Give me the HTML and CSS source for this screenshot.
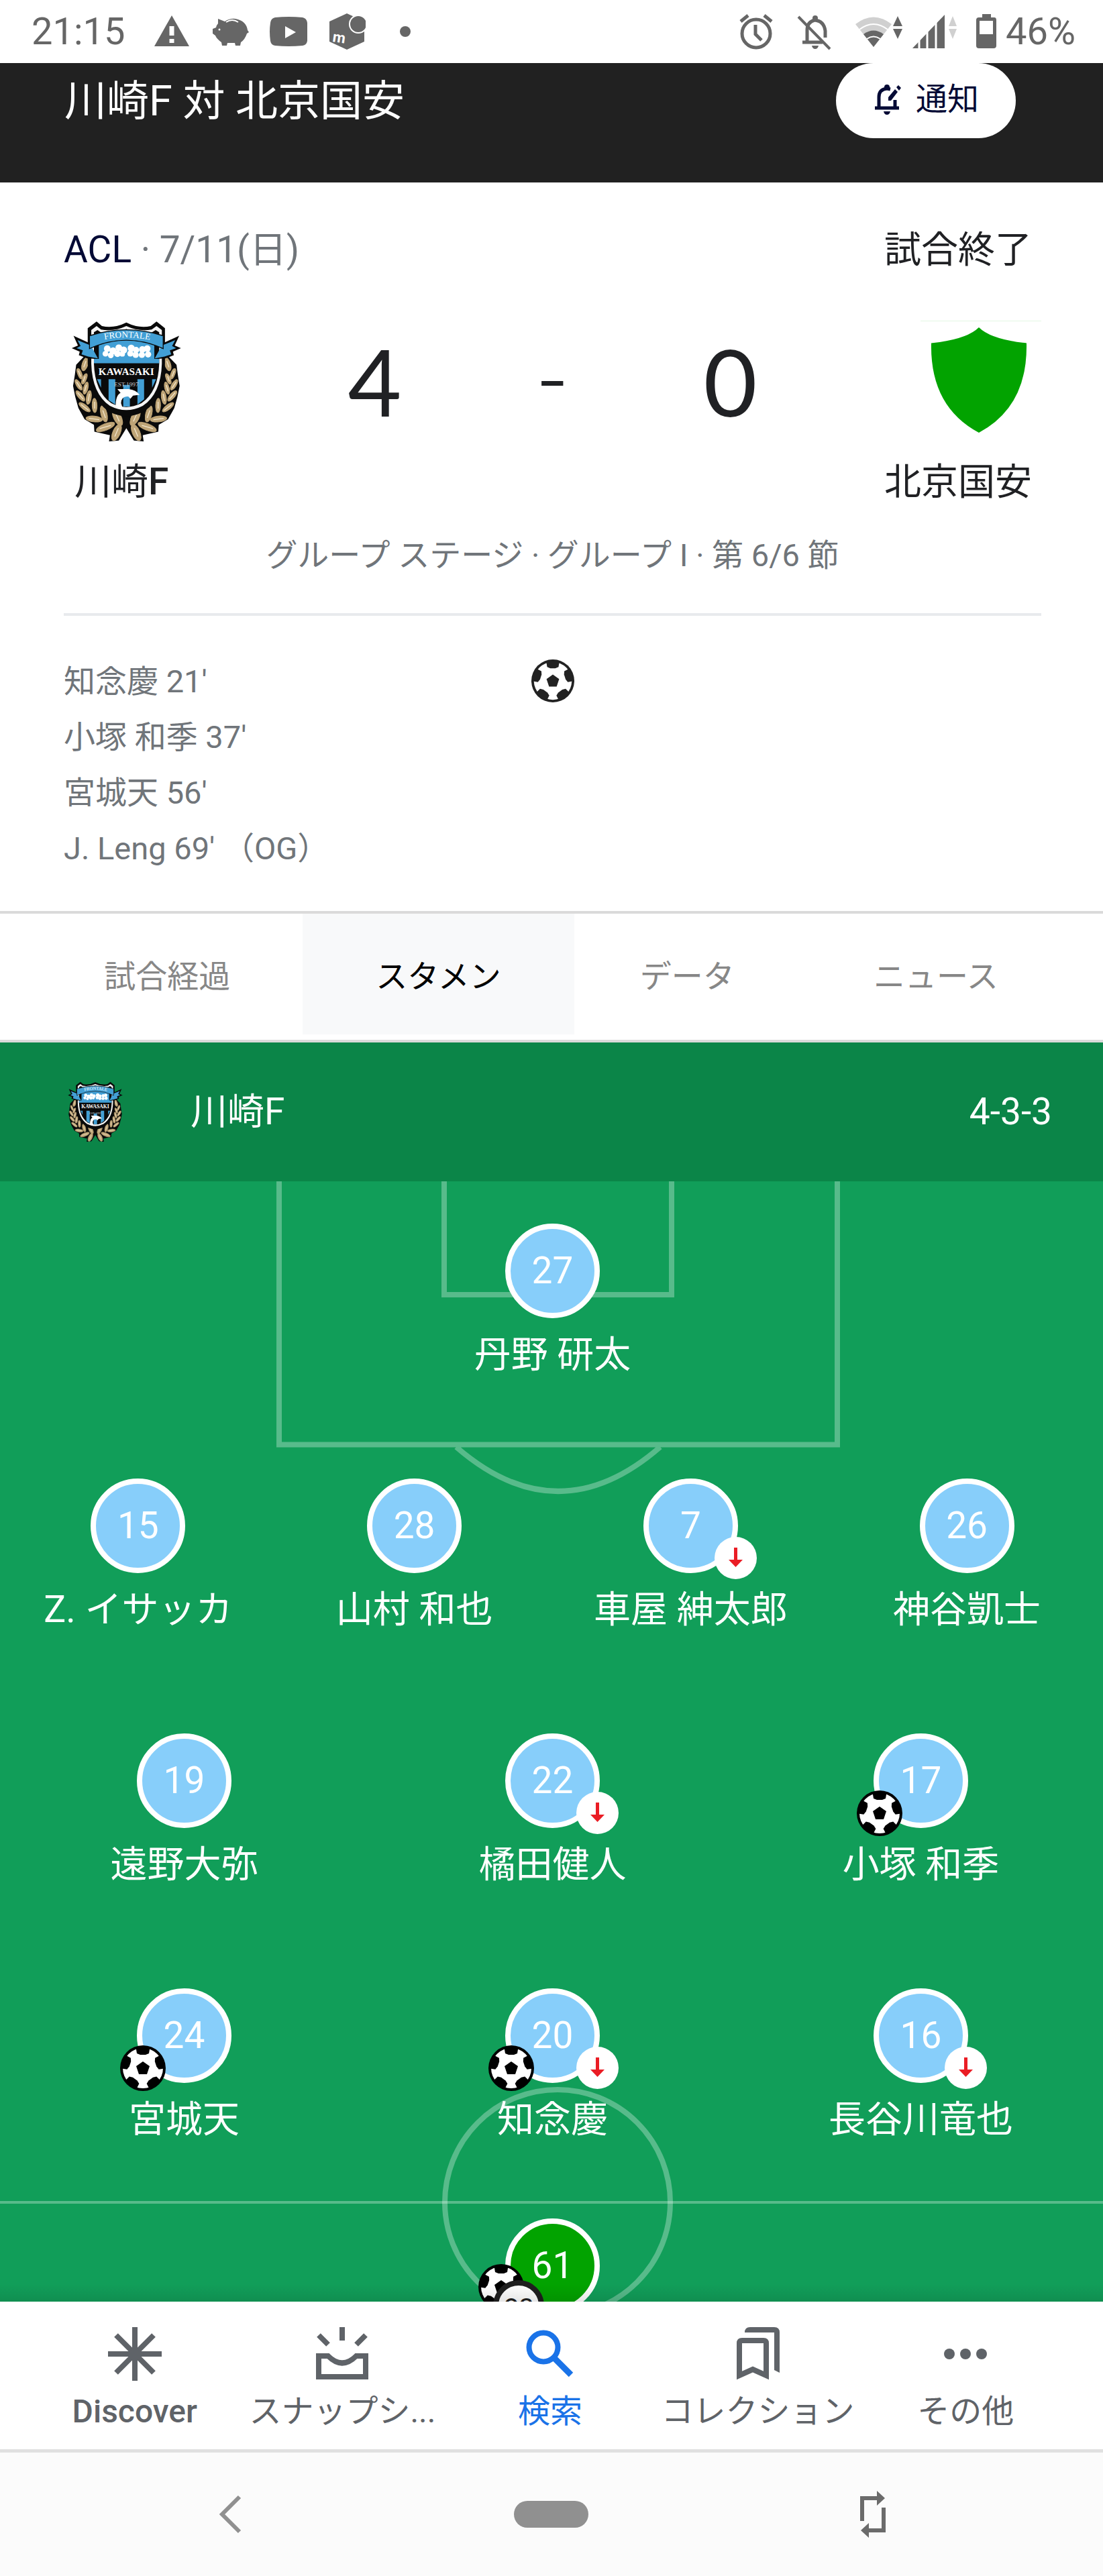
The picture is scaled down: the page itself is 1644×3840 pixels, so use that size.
FILE: index.html
```html
<!DOCTYPE html>
<html lang="ja">
<head>
    <meta charset="UTF-8">
    <meta name="viewport" content="width=device-width, initial-scale=1.0">
    <title>川崎F 対 北京国安</title>
    <link rel="stylesheet" href="styles.css">
</head>
<body>
    <!-- Shared shapes -->
    <svg class="defs" width="0" height="0" aria-hidden="true">
        <symbol id="ball" viewBox="0 0 68 68">
            <clipPath id="ball-clip"><circle cx="34" cy="34" r="32"/></clipPath>
            <circle cx="34" cy="34" r="34" fill="currentColor"/>
            <circle cx="34" cy="34" r="30" fill="#fff"/>
            <path d="M34 24l10 7-4 12H28l-4-12z" fill="currentColor"/>
            <g fill="currentColor" clip-path="url(#ball-clip)">
                <path id="patch" d="M23 0h22l-2 12-5 2h-8l-5-2z"/>
                <use href="#patch" transform="rotate(72 34 34)"/>
                <use href="#patch" transform="rotate(144 34 34)"/>
                <use href="#patch" transform="rotate(216 34 34)"/>
                <use href="#patch" transform="rotate(288 34 34)"/>
            </g>
        </symbol>
        <symbol id="out" viewBox="0 0 63 63">
            <circle cx="31.5" cy="31.5" r="31.5" fill="#fff"/>
            <path d="M29 16h5v18h8L31.5 45 21 34h8z" fill="#ea1d25"/>
        </symbol>
    </svg>

    <!-- Phone status bar -->
    <div class="status-bar">
        <span class="time">21:15</span>
        <div class="status-icons">
            <svg width="56" height="56" viewBox="0 0 56 56"><path d="M28 4l26 46H2z"/><path d="M24.500 20h7v14h-7zM24.500 39h7v6h-7z" fill="#fff"/></svg>
            <svg width="56" height="56" viewBox="0 0 56 56"><path d="M10 9l10 4q8-5 16-4 16 3 18 17l2 3-3 2q-3 9-9 13l-1 5h-7l-1-4H24l-1 4h-7l-1-5Q8 39 6 34l-4-3v-7l5-2q1-4 3-6z"/><path d="M22 14q9-6 18 0" fill="none" stroke="#fff" stroke-width="2"/><circle cx="12" cy="25" r="1.500" fill="#fff"/></svg>
            <svg width="56" height="56" viewBox="0 0 56 56"><path d="M8 7q20-2 41 0 6 1 7 8 1 13 0 27-1 6-7 7-21 2-41 0-6-1-7-7-2-14 0-27 1-7 7-8z"/><path d="M23 20l16 9-16 9z" fill="#fff"/></svg>
            <svg width="56" height="56" viewBox="0 0 56 56"><path d="M28 1l26 12v30L28 55 2 43V13z"/><circle cx="45" cy="17" r="14" fill="#fff"/><circle cx="45" cy="17" r="12"/><text x="6" y="43" font-size="22" font-weight="bold" fill="#fff" transform="rotate(8 6 43)">m</text></svg>
            <svg width="56" height="56" viewBox="0 0 56 56"><circle cx="28" cy="28" r="8"/></svg>
        </div>
        <div class="status-icons status-right">
            <svg width="52" height="56" viewBox="0 0 52 56"><circle cx="26" cy="31" r="21" fill="none" stroke="#666" stroke-width="5"/><path d="M25 18v14l9 9M3 13l11-9M49 13L38 4" fill="none" stroke="#666" stroke-width="5"/></svg>
            <svg class="bell-off" width="52" height="56" viewBox="0 0 52 56"><path d="M15 44V26q0-12 11-15 14 1 16 16v10M8 44h30" fill="none" stroke="#666" stroke-width="5"/><circle cx="27" cy="8" r="4"/><path d="M22 49h10q-1 5-5 5t-5-5z"/><path d="M2 6l47 48" fill="none" stroke="#666" stroke-width="4"/></svg>
            <svg width="70" height="56" viewBox="0 0 70 56"><path d="M27 51L0 17Q27-4 54 17z" fill="#d0d0d0"/><path d="M27 51L12 32q15-11 30 0z"/><path d="M6 25q21-16 42 0M17 39q10-7 20 0" fill="none" stroke="#fff" stroke-width="2"/><path d="M63 5l7 15H56zM63 39l7-15H56z"/></svg>
            <svg width="70" height="56" viewBox="0 0 70 56"><path d="M2 53L50 3v50z"/><path d="M12 0v56M24 0v56M37 0v56" stroke="#fff" stroke-width="3"/><path d="M62 5l6 15H56zM62 39l6-15H56z" fill="#d0d0d0"/></svg>
            <svg class="battery" width="32" height="56" viewBox="0 0 32 56"><path d="M10 2h13v5h5q3 0 3 4v38q0 4-4 4H5q-4 0-4-4V11q0-4 4-4h5z"/><path d="M6 12h20v20H6z" fill="#fff"/></svg>
            <span>46%</span>
        </div>
    </div>

    <!-- Match header -->
    <header class="header">
        <h1>川崎F 対 北京国安</h1>
        <button class="notify" type="button">
            <svg width="44" height="50" viewBox="0 0 44 50"><path d="M3 38h36M9 38V22q0-12 12-13l5 1M33 26v12" fill="none" stroke="#040a35" stroke-width="5"/><circle cx="21" cy="7" r="4"/><path d="M16 43h10q-1 5-5 5t-5-5zM23 22l10-12 4 4-10 13h-4zM35 7l3-3 4 4-3 4z"/></svg>
            通知
        </button>
    </header>

    <!-- Score -->
    <section class="match">
        <div class="match-info">
            <div><a href="#">ACL</a> · 7/11(日)</div>
            <div class="match-state">試合終了</div>
        </div>
        <div class="score-board">
            <div class="team">
                <svg width="180" height="180" viewBox="14 56 544 544">
                    <g id="crest">
                        <!-- laurel -->
                        <path d="M108 215L70 255 64 300 56 350 66 400 80 450 108 500 150 525 152 556 222 572 218 600 262 596 296 540 330 596 374 600 370 572 440 556 442 525 484 500 512 450 526 400 536 350 528 300 522 255 484 215z" fill="#0a0a0a"/>
                        <g id="laurel">
                            <g fill="#bfa577" stroke="#bfa577" stroke-width="3">
                                <ellipse cx="110" cy="252" rx="13" ry="31" transform="rotate(18 110 252)"/>
                                <ellipse cx="86" cy="295" rx="9" ry="25" transform="rotate(-22 86 295)"/>
                                <ellipse cx="107" cy="318" rx="9" ry="25" transform="rotate(22 107 318)"/>
                                <ellipse cx="81" cy="345" rx="10" ry="27" transform="rotate(-32 81 345)"/>
                                <ellipse cx="113" cy="360" rx="10" ry="28" transform="rotate(14 113 360)"/>
                                <ellipse cx="89" cy="395" rx="11" ry="29" transform="rotate(-40 89 395)"/>
                                <ellipse cx="127" cy="402" rx="11" ry="31" transform="rotate(8 127 402)"/>
                                <ellipse cx="108" cy="446" rx="11" ry="31" transform="rotate(-52 108 446)"/>
                                <ellipse cx="153" cy="438" rx="11" ry="32" transform="rotate(-2 153 438)"/>
                                <ellipse cx="151" cy="499" rx="13" ry="37" transform="rotate(-84 151 499)"/>
                                <ellipse cx="195" cy="476" rx="14" ry="37" transform="rotate(-14 195 476)"/>
                                <ellipse cx="202" cy="535" rx="15" ry="44" transform="rotate(-112 202 535)"/>
                                <ellipse cx="256" cy="492" rx="17" ry="40" transform="rotate(-26 256 492)"/>
                                <ellipse cx="252" cy="560" rx="17" ry="39" transform="rotate(24 252 560)"/>
                            </g>
                            <path d="M104 266l10-28M80 282l10 26M110 306l-8 24M72 332l18 28M116 346l-8 28M76 380l26 30M130 386l-6 32M92 434l34 26M153 422v30M128 496l46 6M190 460l12 34M176 542l50-14M248 474l16 36M260 540l-16 38" fill="none" stroke="#f3e6cc" stroke-width="4"/>
                        </g>
                        <use href="#laurel" transform="translate(592 0) scale(-1 1)"/>
                        <!-- shield -->
                        <path d="M122 90L162 60 186 80Q240 92 296 64 352 92 406 80L432 60 470 90V250Q468 400 380 462 296 512 212 462 130 400 122 250z" fill="#0a0a0a"/>
                        <path d="M138 98L162 80 182 96Q240 106 296 80 352 106 410 96L432 80 456 98V250Q452 385 370 440 296 478 222 440 142 385 138 250z" fill="#f5f5f5"/>
                        <path d="M150 108L166 98 180 108Q240 116 296 94 352 116 412 108L428 98 444 108V250Q440 375 364 428 296 462 228 428 154 375 150 250z" fill="#0a0a0a"/>
                        <path d="M172 135h250v113H150v-20h22zM422 135v93h22v20h-22zM216 320h30v114l-30-20zM282 345h30v98h-30zM346 320h30v90l-30 24zM164 320h18v38zM412 320h18l-18 38z" fill="#429fd5"/>
                        <g fill="#fff">
                            <circle cx="210" cy="182" r="15"/><circle cx="202" cy="205" r="13"/><circle cx="226" cy="212" r="13"/><circle cx="236" cy="192" r="16"/>
                            <circle cx="262" cy="178" r="15"/><circle cx="256" cy="205" r="15"/><circle cx="284" cy="188" r="16"/><circle cx="278" cy="206" r="12"/>
                            <circle cx="318" cy="180" r="16"/><circle cx="314" cy="204" r="14"/><circle cx="340" cy="188" r="14"/><circle cx="338" cy="210" r="14"/>
                            <circle cx="368" cy="186" r="15"/><circle cx="366" cy="210" r="14"/><circle cx="390" cy="182" r="15"/><circle cx="394" cy="208" r="14"/>
                        </g>
                        <path d="M248 440q0-48 22-58l-14-18h50q34 4 50 26l-30 4-12 14-8-10q-32-4-34 30l10 30-16-6z" fill="#fff"/>
                        <!-- ribbon -->
                        <path d="M58 124L132 158V206L166 214 160 228 120 226 82 212 86 196 50 180 78 168zM534 124L460 158V206L426 214 432 228 472 226 510 212 506 196 542 180 514 168z" fill="#0a0a0a"/>
                        <path d="M76 144L136 168 168 226 124 218 94 208 100 190 72 180 90 170zM516 144L456 168 424 226 468 218 498 208 492 190 520 180 502 170z" fill="#429fd5"/>
                        <path d="M130 124Q296 70 462 124V182Q296 106 130 182z" fill="#429fd5" stroke="#0a0a0a" stroke-width="4"/>
                        <path id="arc" d="M170 147Q296 116 430 149" fill="none"/>
                        <g fill="#fff" font-family="Liberation Serif, serif">
                            <text font-size="40"><textPath href="#arc" startOffset="50%" text-anchor="middle">FRONTALE</textPath></text>
                            <text x="296" y="300" font-size="46" font-weight="bold" text-anchor="middle">KAWASAKI</text>
                            <text x="296" y="352" font-size="28" text-anchor="middle" fill="#ccc">EST.1997</text>
                        </g>
                    </g>
                </svg>
                <div class="team-name">川崎<b>F</b></div>
            </div>
            <div class="score">4</div>
            <div class="score dash">-</div>
            <div class="score">0</div>
            <div class="team team-away">
                <svg width="180" height="180" viewBox="3 2 180 180"><path d="M3 2h180v1H3z" fill="#e3f6e3"/><path d="M90 12Q108 30 161 35.500 163 130 90 169 17 130 19 35.500 72 30 90 12z" fill="#02a300"/></svg>
                <div class="team-name">北京国安</div>
            </div>
        </div>
        <div class="stage">グループ ステージ · グループ I · 第 6/6 節</div>
        <div class="scorers">
            <ul>
                <li>知念慶 21'</li>
                <li>小塚 和季 37'</li>
                <li>宮城天 56'</li>
                <li>J. Leng 69' （OG）</li>
            </ul>
            <svg class="goal-mark" width="64" height="64"><use href="#ball"/></svg>
        </div>
    </section>

    <!-- Tabs -->
    <nav class="tabs">
        <a href="#">試合経過</a>
        <a href="#" class="active">スタメン</a>
        <a href="#">データ</a>
        <a href="#">ニュース</a>
    </nav>

    <!-- Line-up -->
    <div class="lineup-header">
        <svg width="90" height="90" viewBox="24 56 544 544"><use href="#crest"/></svg>
        <h2>川崎F</h2>
        <span>4-3-3</span>
    </div>
    <main class="pitch">
        <svg class="markings" viewBox="0 0 1644 1670" preserveAspectRatio="xMidYMin slice">
            <g fill="none" stroke="#fff" stroke-width="8" opacity="0.3">
                <path d="M662 0v169h339V0M416 0v392.500h832V0M680 396q152 132 304 0"/>
                <circle cx="831" cy="1522" r="168"/>
            </g>
            <path d="M-2000 1522h6000" stroke="#fff" stroke-width="4" opacity="0.3"/>
        </svg>
        <div class="row">
            <div class="player"><div class="number">27</div>丹野 研太</div>
        </div>
        <div class="row">
            <div class="player"><div class="number">15</div>Z. イサッカ</div>
            <div class="player"><div class="number">28</div>山村 和也</div>
            <div class="player"><div class="number">7<svg class="sub"><use href="#out"/></svg></div>車屋 紳太郎</div>
            <div class="player"><div class="number">26</div>神谷凱士</div>
        </div>
        <div class="row">
            <div class="player"><div class="number">19</div>遠野大弥</div>
            <div class="player"><div class="number">22<svg class="sub"><use href="#out"/></svg></div>橘田健人</div>
            <div class="player"><div class="number">17<svg class="goal"><use href="#ball"/></svg></div>小塚 和季</div>
        </div>
        <div class="row last">
            <div class="player"><div class="number">24<svg class="goal"><use href="#ball"/></svg></div>宮城天</div>
            <div class="player"><div class="number">20<svg class="goal"><use href="#ball"/></svg><svg class="sub"><use href="#out"/></svg></div>知念慶</div>
            <div class="player"><div class="number">16<svg class="sub"><use href="#out"/></svg></div>長谷川竜也</div>
        </div>
        <div class="row away">
            <div class="player"><div class="number">61<svg class="goal goal-away"><use href="#ball"/></svg><span class="own-goal">OG</span></div></div>
        </div>
    </main>

    <!-- App navigation -->
    <nav class="app-nav">
        <a href="#" class="discover">
            <svg width="80" height="80" viewBox="0 0 80 80"><path d="M40 0v80M0 40h80M12 12l56 56M68 12L12 68" fill="none" stroke="#5f6368" stroke-width="8"/></svg>
            Discover
        </a>
        <a href="#">
            <svg width="80" height="80" viewBox="0 0 80 80"><path d="M40 0v20M5 12l14 14M75 12L61 26M5 43h14q21 21 42 0h14v31H5z" fill="none" stroke="#5f6368" stroke-width="8"/></svg>
            スナップシ...
        </a>
        <a href="#" class="current">
            <svg width="80" height="80" viewBox="0 0 80 80"><circle cx="30" cy="30" r="21.500" fill="none" stroke="#1a73e8" stroke-width="8"/><path d="M45 45l26 26" stroke="#1a73e8" stroke-width="9"/></svg>
            検索
        </a>
        <a href="#">
            <svg width="80" height="80" viewBox="0 0 80 80"><path d="M12 72V24q0-4 4-4h32q4 0 4 4v48L32 63z" fill="none" stroke="#5f6368" stroke-width="8"/><path d="M20 8q0-8 8-8h36q8 0 8 8v60l-8-4V8z"/></svg>
            コレクション
        </a>
        <a href="#">
            <svg width="80" height="80" viewBox="0 0 80 80"><circle cx="16" cy="40" r="8"/><circle cx="40" cy="40" r="8"/><circle cx="64" cy="40" r="8"/></svg>
            その他
        </a>
    </nav>

    <!-- System navigation -->
    <footer class="system-nav">
        <button type="button" aria-label="戻る"><svg width="40" height="64" viewBox="0 0 40 64"><path d="M34 6L8 32l26 26" fill="none" stroke="#909090" stroke-width="6"/></svg></button>
        <button type="button" aria-label="ホーム" class="home"></button>
        <button type="button" aria-label="回転"><svg width="40" height="70" viewBox="0 0 40 70"><path d="M4 45V11h22M36 25v34H14" fill="none" stroke="#6b6b6b" stroke-width="6"/><path d="M26 0l12 11-12 11zM14 48L2 59l12 11z" fill="#6b6b6b"/></svg></button>
    </footer>
</body>
</html>
```
FILE: styles.css
```css
* {
    margin: 0;
    padding: 0;
    box-sizing: border-box;
}
body {
    font-family: Roboto, 'Noto Sans CJK JP', sans-serif;
    font-size: 47px;
    line-height: 64px;
    color: #202124;
    background-color: #fff;
    display: flex;
    flex-direction: column;
    min-height: 100vh;
}
a {
    color: inherit;
    text-decoration: none;
}
button {
    border: none;
    background: none;
    font-family: inherit;
}
svg {
    display: block;
    flex-shrink: 0;
}
.defs {
    position: absolute;
}

/* status bar */
.status-bar {
    display: flex;
    align-items: center;
    height: 94px;
    padding: 0 41px 0 47px;
    font-size: 56px;
    color: #666;
    fill: #666;
    background-color: #fff;
}
.time {
    margin-right: 42px;
}
.status-icons {
    display: flex;
    align-items: center;
    gap: 31px;
}
.status-right {
    margin-left: auto;
    gap: 13px;
}
.bell-off {
    margin: 0 22px;
}
.battery {
    margin-left: 13px;
}

/* header */
.header {
    display: flex;
    justify-content: space-between;
    align-items: flex-start;
    height: 178px;
    padding: 0 130px 0 96px;
    background-color: #212121;
    color: #fff;
}
.header h1 {
    font-size: 63px;
    font-weight: 400;
    line-height: 114px;
}
.notify {
    display: flex;
    align-items: center;
    justify-content: center;
    gap: 20px;
    width: 268px;
    height: 112px;
    padding-bottom: 4px;
    border-radius: 56px;
    background-color: #fff;
    color: #040a35;
    fill: #040a35;
    font-size: 47px;
    line-height: 64px;
}

/* score */
.match {
    padding: 68px 92px 52px 95px;
    border-bottom: 4px solid #dadada;
}
.match-info {
    display: flex;
    justify-content: space-between;
    font-size: 55px;
    color: #70757a;
}
.match-info a {
    color: #040a35;
}
.match-state {
    padding-right: 14px;
    color: #202124;
}
.score-board {
    display: grid;
    grid-template-columns: 5fr 4fr 4fr 4fr 5fr;
    margin-top: 74px;
}
.team {
    display: flex;
    flex-direction: column;
    gap: 28px;
}
.team-away {
    align-items: flex-end;
}
.team-name {
    padding: 0 14px 0 16px;
    font-size: 55px;
}
.team-name b {
    font-weight: 500;
}
.score {
    font-family: Lato, Roboto, sans-serif;
    font-size: 138px;
    line-height: 180px;
    text-align: center;
}
.dash {
    font-family: Roboto, sans-serif;
    font-weight: 300;
}
.stage {
    margin-top: 46px;
    padding-bottom: 54px;
    border-bottom: 4px solid #e8eaed;
    text-align: center;
    color: #70757a;
}
.scorers {
    display: grid;
    grid-template-columns: 1fr 64px 1fr;
    margin-top: 56px;
    line-height: 83px;
    color: #70757a;
}
.scorers ul {
    list-style: none;
}
.goal-mark {
    margin-top: 9px;
    color: #222;
}

/* tabs */
.tabs {
    display: grid;
    grid-template-columns: 6fr 6fr 5fr 6fr;
    padding: 0 47px 8px;
    border-bottom: 4px solid #dadada;
    background-color: #fff;
    line-height: 172px;
    text-align: center;
    color: #878787;
}
.tabs a {
    padding-top: 8px;
}
.tabs .active {
    background-color: #f8f9fa;
    color: #000;
}

/* line-up */
.lineup-header {
    display: flex;
    align-items: center;
    height: 207px;
    padding: 0 76px 2px 97px;
    background-color: #0b8548;
    color: #fff;
    font-size: 55px;
}
.lineup-header h2 {
    flex: 1;
    margin-left: 97px;
    font-size: 55px;
    font-weight: 400;
}
.pitch {
    position: relative;
    flex: 1;
    min-height: 1670px;
    padding-top: 63px;
    overflow: hidden;
    background-color: #119e59;
    color: #fff;
    font-size: 55px;
}
.pitch::after {
    content: "";
    position: absolute;
    left: 0;
    right: 0;
    bottom: 0;
    height: 26px;
    background: linear-gradient(rgba(0,0,0,0), rgba(0,0,0,0.1));
}
.markings {
    position: absolute;
    top: 0;
    left: 0;
    width: 100%;
    height: 1670px;
}
.row {
    position: relative;
    display: flex;
    height: 380px;
    margin-right: -3px;
}
.row.last {
    height: 343px;
}
.row.away {
    height: 123px;
}
.player {
    flex: 1;
    display: flex;
    flex-direction: column;
    align-items: center;
    gap: 22px;
}
.number {
    position: relative;
    width: 141px;
    height: 141px;
    border: 8px solid #fff;
    border-radius: 50%;
    background-color: #87cefa;
    line-height: 125px;
    text-align: center;
}
.away .number {
    background-color: #02a300;
}
.sub {
    position: absolute;
    right: -36px;
    bottom: -17px;
    width: 63px;
    height: 63px;
}
.goal {
    position: absolute;
    left: -33px;
    bottom: -20px;
    width: 68px;
    height: 68px;
    color: #000;
}
.goal-away {
    left: -48px;
    top: 60px;
}
.own-goal {
    position: absolute;
    left: -26px;
    top: 84px;
    width: 76px;
    height: 76px;
    border: 8px solid #1f1f1f;
    border-radius: 50%;
    background-color: #fff;
    color: #1f1f1f;
    font-size: 32px;
    font-weight: 500;
    line-height: 60px;
}

/* bottom bars */
.app-nav {
    display: grid;
    grid-template-columns: repeat(5, 1fr);
    height: 225px;
    padding: 38px 50px 0 46px;
    border-bottom: 5px solid #e0e0e0;
    background-color: #fff;
    color: #5f6368;
    fill: #5f6368;
    font-size: 48px;
}
.app-nav a {
    display: flex;
    flex-direction: column;
    align-items: center;
    gap: 14px;
    white-space: nowrap;
}
.app-nav .discover {
    font-weight: 500;
}
.app-nav .current {
    color: #1a73e8;
}
.system-nav {
    display: grid;
    grid-template-columns: repeat(3, 1fr);
    place-items: center;
    height: 184px;
    padding: 0 104px;
    background-color: #fbfbfb;
}
.home {
    width: 111px;
    height: 40px;
    border-radius: 20px;
    background-color: #909090;
}
```
